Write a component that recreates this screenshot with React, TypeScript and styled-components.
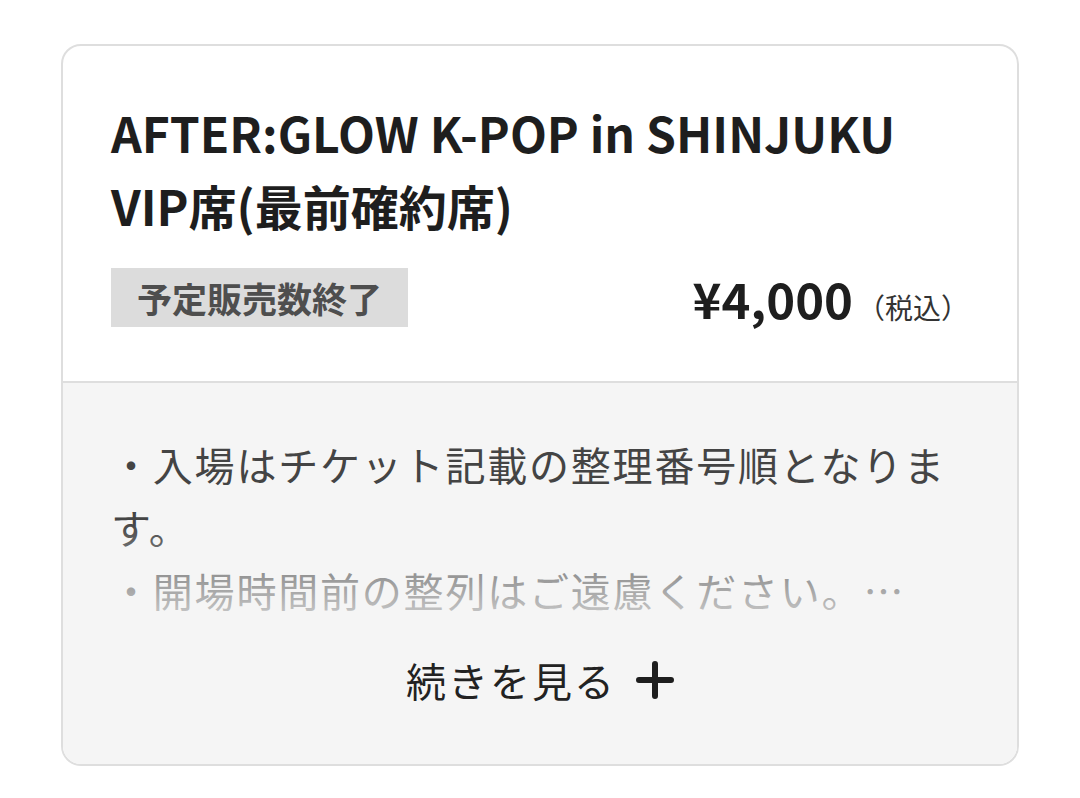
import * as React from "react";
import styled, { createGlobalStyle } from "styled-components";

const GlobalStyle = createGlobalStyle`
  html, body {
    margin: 0;
    padding: 0;
    background: #ffffff;
  }
  body {
    font-family: "Noto Sans CJK JP", "Noto Sans", sans-serif;
    color: #222;
  }
`;

const Page = styled.div`
  padding: 44px 61px 0;
`;

const Card = styled.div`
  border: solid 2.5px #dedede;
  border-radius: 20px;
  overflow: hidden;
  background-color: #ffffff;
`;

const Head = styled.div`
  padding: 50px 48px 54px;
  border-bottom: solid 2.5px #dedede;
`;

const Title = styled.h1`
  margin: 0;
  font-size: 48px;
  font-weight: 700;
  line-height: 73px;
  color: #1e1e1e;
`;

const InfoRow = styled.div`
  display: flex;
  align-items: center;
  justify-content: space-between;
  height: 59px;
  margin-top: 26px;
`;

const Badge = styled.div`
  height: 59px;
  display: flex;
  align-items: center;
  padding: 0 26px;
  background-color: #dcdcdc;
  color: #4e4e4e;
  font-size: 35px;
  font-weight: 700;
`;

const PriceWrap = styled.div`
  display: flex;
  align-items: baseline;
`;

const Price = styled.span`
  font-size: 49px;
  font-weight: 700;
  color: #1e1e1e;
`;

const Tax = styled.span`
  font-size: 28px;
  color: #333;
  margin-left: 4px;
`;

const Body = styled.div`
  background-color: #f5f5f5;
  padding: 50px 48px 54px;
`;

const NoteWrap = styled.div`
  position: relative;
`;

const Note = styled.p`
  margin: 0;
  font-size: 40px;
  line-height: 63px;
  letter-spacing: 1.8px;
  color: #444;
  white-space: pre-line;
`;

const Fade = styled.div`
  position: absolute;
  left: 0;
  right: 0;
  bottom: 0;
  height: 100px;
  background: linear-gradient(
    rgba(245, 245, 245, 0),
    rgba(245, 245, 245, 0.4) 45%,
    rgba(245, 245, 245, 0.78)
  );
`;

const MoreButton = styled.button.attrs({
  type: "button",
})`
  display: flex;
  align-items: center;
  justify-content: center;
  gap: 20px;
  width: 100%;
  margin-top: 28px;
  padding: 0;
  border: none;
  background: none;
  font-family: inherit;
  font-size: 40px;
  line-height: 60px;
  letter-spacing: 2px;
  color: #222;
`;

const PlusIcon = () => (
  <svg width="38" height="38" viewBox="0 0 38 38">
    <path
      d="M19 3 V35 M3 19 H35"
      stroke="#1e1e1e"
      strokeWidth="6"
      strokeLinecap="round"
    />
  </svg>
);

const noteText =
  "・入場はチケット記載の整理番号順となります。\n・開場時間前の整列はご遠慮ください。…";

export default function App() {
  return (
    <>
      <GlobalStyle />
      <Page>
        <Card>
          <Head>
            <Title>
              AFTER:GLOW K-POP in SHINJUKU
              <br />
              VIP席(最前確約席)
            </Title>
            <InfoRow>
              <Badge>予定販売数終了</Badge>
              <PriceWrap>
                <Price>¥4,000</Price>
                <Tax>（税込）</Tax>
              </PriceWrap>
            </InfoRow>
          </Head>
          <Body>
            <NoteWrap>
              <Note>{noteText}</Note>
              <Fade />
            </NoteWrap>
            <MoreButton>
              続きを見る
              <PlusIcon />
            </MoreButton>
          </Body>
        </Card>
      </Page>
    </>
  );
}
